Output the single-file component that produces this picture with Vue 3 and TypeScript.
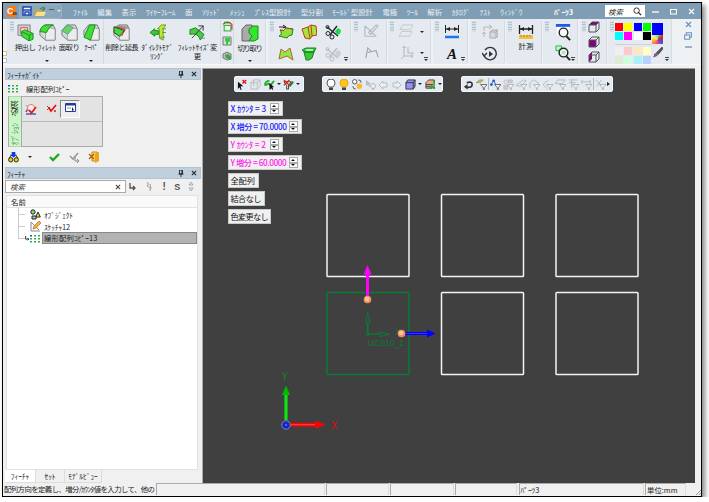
<script setup lang="ts">
import { h } from 'vue'

const green = '#42dc38'
const cube = '<path d="M1 7 6 1h9l2 4v12H7L1 12z" fill="#d6d6d6" stroke="#777"/><path d="M7 17V8l4-4 6 1v12z" fill="#ececec" stroke="#888" stroke-width=".7"/>'
const scissors = (c: string, d: string) => `<path d="M2 3 13 12M12 2 5 11" stroke="${c}" stroke-width="1.4"/><circle cx="3" cy="9.500" r="2" fill="none" stroke="${c}"/><circle cx="7" cy="13" r="2" fill="none" stroke="${c}"/><circle cx="2.500" cy="3" r="1.500" fill="none" stroke="${c}"/><path d="m10 7 3-3 3 2-1 4-3 1z" fill="${d}"/>`
const glasses = '<path d="M1 7 4 3M11 7 8 3" stroke="#222"/><circle cx="3" cy="8.500" r="2.400" fill="#ddd000" stroke="#222"/><circle cx="9" cy="8.500" r="2.400" fill="#ddd000" stroke="#222"/><path d="M4 0h4v3h2L6 6 2 3h2z" fill="#1338d8"/>'
const dots = '<g fill="#2fae45"><path d="M4 2h2v1.600H4zM8 2h2v1.600H8zM0 5h2v1.600H0zM4 5h2v1.600H4zM8 5h2v1.600H8zM0 8h2v1.600H0zM4 8h2v1.600H4zM8 8h2v1.600H8z"/></g><path d="M0 2h2v1.600H0z" fill="#24f"/>'
const funnel = (c: string) => `<path d="M5 6h7L9 9.500V12L8 11V9.500z" fill="#f4f4f4" stroke="${c}" stroke-width=".9"/>`
const wire = '<path d="M1 4 4 1h7v7l-3 3H1zM1 4h7v7M8 4l3-3" fill="none" stroke="#555"/>'
const lens = '<circle cx="8" cy="7" r="4.600" fill="#f4f8fa" stroke="#222" stroke-width="1.500"/><path d="m11 11 4 4" stroke="#222" stroke-width="2"/>'

const art: Record<string, string> = {
  extrude: `<path d="M1 1h13v11H1z" fill="#ccc" stroke="#888"/><path d="M4 4h7v6H4z" fill="#eee" stroke="#d44"/><path d="m5 8 3-2 9 4v6l-4 2-8-5z" fill="${green}" stroke="#178c1c"/><path d="m5 8 8 4v6M13 12l4-2" fill="none" stroke="#178c1c"/>`,
  fillet: cube + `<path d="M1 8Q2 2 7 1h8Q10 3 8 9z" fill="${green}" stroke="#178c1c"/>`,
  chamfer: cube + `<path d="m1 7 6-6 6 3-6 7z" fill="#6ed25e" stroke="#4a9"/>`,
  taper: cube + `<path d="M1 14 7 1h6L8 17z" fill="${green}" stroke="#178c1c"/>`,
  remove: cube + `<path d="m1 3 5-2 11 2-5 3z" fill="#999"/><path d="m1 3 11 4-5 6-6-4z" fill="${green}" stroke="#333"/><path d="m4 3 9 3-4 7" fill="none" stroke="#d22"/>`,
  direct: '<path d="M1 9 6 5v2h4v4H6v2z" fill="#35c932" stroke="#178c1c"/><path d="m9 5 4-4h5l-3 4v12l-4-2V5zM14 5h4M14 9h4M12 14h5" fill="#b9e840" stroke="#6a9a20"/>',
  resize: '<path d="M1 6h8l4 4v5h4" fill="none" stroke="#888"/><path d="m1 6 6-2 9 7-4 6Q10 9 1 11z" fill="#46ca46" stroke="#178c1c"/><path d="m6 12 9-10M10 2h5v5M3 15l3-3" fill="none" stroke="#333"/>',
  cut: '<path d="m1 5 4-4h6v13l-3 3H1z" fill="#aaa" stroke="#666"/><path d="m8 5 4-3h5v13l-4 2H8l3-5-3-3z" fill="#38e52d" stroke="#178c1c"/>',
  mini1: '<rect x="2" y="4" width="6" height="5" fill="#e8fae8" stroke="#2bb548"/><path d="M1 3q4-4 8 0v5" fill="none" stroke="#d22"/><path d="m2 1 4 1" stroke="#1a1"/>',
  mini2: '<path d="M1 1h8v8H1z" fill="#ddd" stroke="#777"/><path d="M3 2h5v3L6 7v2H4V6L3 5z" fill="#2fd136"/>',
  mini3: '<path d="m1 3 4-2 4 2v5L5 9 1 7z" fill="#bbb" stroke="#777"/><path d="m3 4 3-1 3 3v3L4 7z" fill="#35a744"/>',
  surf1: '<path d="M2 6q4 2 6-2l7 1-1 6q-4 0-5 3L1 12q4-2 1-6z" fill="#8be33a" stroke="#2a7d28"/><path d="M2 6q4 2 6-2l7 1" fill="none" stroke="#c43a22"/><path d="M1 3h6M5 1l3 2-3 1" fill="none" stroke="#222"/>',
  surf2: '<path d="M1 5 7 3l3-2 5 1 1 9-5 1-2 3-5-1z" fill="#a6e63b" stroke="#c43a22"/><path d="m7 3 2 11M10 1l1 11" stroke="#c43a22"/>',
  surf3: '<path d="M1 13 3 3l4 3 5-4 3 12-6-4z" fill="#8be93f" stroke="#c8573f"/>',
  surf4: '<path d="m1 4 4-2h10l-2 4H3zM3 6h10l-2 6-3 2H5z" fill="#35c838" stroke="#1d7f24"/><path d="M5 4h7" stroke="#d6fad0" stroke-width="1.500"/>',
  trim: scissors('#222', '#26d54b'), trimOff: scissors('#b9bec2', '#ccd0d3'),
  sketch: '<path d="M1 2v11h12M1 2l12 11M5 9l8-8 2 1-8 9z" fill="none" stroke="#b5babd" stroke-width="1.200"/>',
  poly: '<path d="M2 14 4 3l4 4 5-1 2 7M4 8l4-1" fill="none" stroke="#9da3a6" stroke-width="1.100"/>',
  layer: '<path d="M4 1h11l-3 5H1zM3 8h11l-3 5H0z" fill="none" stroke="#c2c7ca"/>',
  axes: '<path d="M5 1v10l-3 3M5 11h9M3 3l2-2 2 2M12 9l2 2-2 2M9 8V2M9 8h6" fill="none" stroke="#b2b8bc"/>',
  dim: '<path d="M1.500 1v8M14.500 1v8M1 5h14" stroke="#222"/><path d="m2 5 4-2v4zM14 5l-4-2v4z" fill="#222"/><path d="M1 13h14" stroke="#1f72e8" stroke-width="2.500"/>',
  convert: '<path d="M2 7V3h7M7 1l3 2-3 2M2 13v-4M0 10l2-2 2 2" fill="none" stroke="#b5b9bb"/><path d="m8 8 2-2h6v6l-2 2H8zM8 8h6v6M14 8l2-2" fill="#d9dadb" stroke="#aaa"/>',
  history: '<path d="M3 4a6.200 6.200 0 1 1-1 5M0 7l2 3 3-3" fill="none" stroke="#333" stroke-width="1.400"/><path d="m7 5 4 3-4 3z" fill="#333"/>',
  measure: '<path d="M1.500 1v9M14.500 1v9M1 5h14" stroke="#222" stroke-width="1.300"/><path d="m2 5 4-2v4zM14 5l-4-2v4z" fill="#222"/><path d="M1 11h14v4H1z" fill="#f3c242"/><path d="M3 11v2M6 11v2M9 11v2M12 11v2" stroke="#9b6810" stroke-width=".7"/>',
  zoomWin: '<path d="M1 1h15v12H1z" fill="#fff" stroke="#ddd"/><path d="M1 1.500h15" stroke="#1e59e9" stroke-width="3"/><g transform="translate(1 2)">' + lens + '</g>',
  zoomAll: '<path d="M1 1h6v5H1z" fill="#bff5c4" stroke="#2fae45"/><path d="M4 4h6v6H4z" fill="#5bd55e"/><g transform="translate(1 1)">' + lens + '<path d="M6 5h4v4H6z" fill="#a8efb0"/></g>',
  cubeTop: '<path d="M1 4 4 1h7L8 4z" fill="#800080"/>' + wire,
  cubeFront: '<path d="M1 4h7v7H1z" fill="#800080"/>' + wire,
  cubeSide: '<path d="M1 4 4 1v7l-3 3z" fill="#800080"/>' + wire,
  brush: '<path d="M11 0 5 6l2 2 5-6z" fill="#555" stroke="#222" stroke-width=".6"/><path d="m5 6 2 2q-2 4-6 3 2-1 1-3z" fill="#85519c"/>',
  save: '<path d="M1 1h8v8H1z" fill="#fff" stroke="#1f48b5" stroke-width="1.500"/><path d="M1 4h8M3 9V6h4v3" fill="none" stroke="#1f48b5" stroke-width="1.500"/>',
  open: '<path d="M0 4h4l1 1h4v5H0z" fill="#dca631"/><path d="m2 6h9L9 10H0z" fill="#ffe08b"/><path d="M5 3q3-3 5 0M9 1v3H7" fill="none" stroke="#268638"/>',
  dots,
  must1: '<path d="m1 11h10M1 9q1-3 4-4" fill="none" stroke="#55a" stroke-width="1.500"/><circle cx="6" cy="5" r="3.500" fill="#fff4f0" stroke="#d77"/><path d="m1 2 2 2" stroke="#d77"/><path d="m4 7 2.500 3L11 4" fill="none" stroke="#e11" stroke-width="1.700"/>',
  must2: '<path d="m1 3 4 4M1 7l3-3" stroke="#a33"/><path d="m3 5 2 3 5-6" fill="none" stroke="#e11" stroke-width="1.700"/><circle cx="9" cy="8" r="1" fill="#b23"/>',
  win: '<path d="M.5.5h10v8H.5z" fill="#fff" stroke="#223c9a"/><path d="M1 1.500h9" stroke="#223c9a" stroke-width="2"/><path d="M2 5h4" stroke="#999"/><path d="M7 4v4l2-1z" fill="#222"/>',
  glasses,
  ok: '<path d="m1 5 3 3 6-6" fill="none" stroke="#18ad1a" stroke-width="2.300"/>',
  okNext: '<path d="m1 4 3 3 5-6" fill="none" stroke="#999" stroke-width="1.600"/><path d="M6 5v4h4M8 7l2 2-2 2" fill="none" stroke="#888"/>',
  exit: '<path d="M4 1h5v9H4z" fill="#ffd254" stroke="#ca8813"/><path d="m7 3 4-2v9l-4 2z" fill="#eda51b"/><path d="m1 3 5 5M6 3 1 8" stroke="#b4580c" stroke-width="1.300"/>',
  shapes: '<circle cx="3" cy="3" r="2.200" fill="#7be06d" stroke="#222"/><path d="m8 3 2.300 5H5.700z" fill="#dede3b" stroke="#222"/><path d="M2 7h4v3H2z" fill="#bbb" stroke="#222"/>',
  pencil: '<path d="M1 1v9h9M1 1l8 8" fill="none" stroke="#888"/><path d="m3 8 1-3 5-5 2 2-5 5z" fill="#f5b02e" stroke="#b5542d" stroke-width=".6"/>',
  pin: '<path d="M1.500 0h3v4h-3zM.5 4h5M3 4v3" fill="none" stroke="#222" stroke-width=".9"/><path d="M3.500 0h1v4h-1z" fill="#222"/>',
  x: '<path d="m1 1 5 5M6 1 1 6" stroke="currentColor" stroke-width="1.200"/>',
  turn: '<path d="M1 0v5h5M4 3l2 2-2 2" fill="none" stroke="currentColor" stroke-width="1.300"/>',
  squig: '<path d="M2 0q3 2 0 4 4 1 3 5M5 2l1 5" fill="none" stroke="#999"/>',
  updown: '<path d="m1 3 2-3 2 3zM1 6l2 3 2-3z" fill="none" stroke="#999" stroke-width=".8"/>',
  curX: '<path d="M1 3v8l2-2 1 3h1L4 8h3z" fill="#111"/><path d="m6 1 4 4M10 1 6 5" stroke="#e11" stroke-width="1.500"/>',
  boxOff: '<path d="M1 4 4 1h7v7l-3 3H1zM1 4h7v7M8 4l3-3M4 1v7" fill="none" stroke="#b9b9b9"/>',
  pick: '<path d="M1 7q0-5 5-5M1 7l4-2 2 2 4-5" fill="none" stroke="#26b02c" stroke-width="2"/><path d="M6 4v8l2-2 1 2 1-1-1-2h2z" fill="#111"/>',
  pickX: '<path d="M1 3h8L6 7v4H4V7z" fill="#eee" stroke="#333"/><path d="m1 1 6 6M7 1 1 7" stroke="#e11" stroke-width="1.400"/><path d="m7 8 4-5" stroke="#297a31" stroke-width="2.200"/>',
  bulb: '<path d="M3 8Q1 6 1 4a4 4 0 0 1 8 0q0 2-2 4z" fill="#fff" stroke="#555"/><path d="M3 8.500h4V11H3z" fill="#444"/>',
  bulbOn: '<path d="M3 8Q1 6 1 4a4 4 0 0 1 8 0q0 2-2 4z" fill="#ffc61c" stroke="#eea414"/><path d="M3 8.500h4V11H3z" fill="#444"/>',
  bulbs: '<circle cx="3" cy="3" r="2.400" fill="#fff" stroke="#444"/><circle cx="8" cy="8" r="3" fill="#ffb52c"/><path d="M7 1q3 0 3 3M1 8q0 3 3 3" fill="none" stroke="#444"/>',
  bulbPick: '<path d="M1 1v6l2-1 1 2 1-1-1-2h2z" fill="#bbb"/><circle cx="8" cy="7" r="2.500" fill="#eee" stroke="#bbb"/><path d="M7 10h2" stroke="#aaa"/>',
  left: '<path d="m1 6 4-4v2h4v4H5v2z" fill="#eee" stroke="#bbb"/>',
  right: '<path d="M10 6 6 2v2H2v4h4v2z" fill="#eee" stroke="#bbb"/>',
  violet: '<path d="M1 4 3 1h8v7l-2 3H1z" fill="#9a8ff5" stroke="#333"/><path d="M1 4h8v7M9 4l2-3" fill="none" stroke="#333"/>',
  stack: '<path d="m1 4 3-3h6v6l-3 3H1z" fill="#e8aa83" stroke="#444"/><path d="M1 6h8M1 8h7" stroke="#444"/><path d="M10 1v3M5 9h5M7 7v4M10 8v3" stroke="#1fae2a" stroke-width="2"/>',
  back: '<path d="M3 9q7 1 7-3T4 4" fill="none" stroke="#333" stroke-width="1.800"/><path d="M1 8.500 5 5.500v6z" fill="#333"/>',
  flt1: '<path d="M0 4 4 1h4L5 4z" fill="#8c7" stroke="#b95"/>' + funnel('#555'),
  flt2: '<path d="m1 6 3-4 3 5" fill="none" stroke="#2359c9"/><circle cx="1.500" cy="6" r="1.500" fill="#2359c9"/><circle cx="4" cy="2" r="1.500" fill="#2359c9"/>' + funnel('#555'),
  o1: '<circle cx="3" cy="3" r="2" fill="none" stroke="#bbb"/><path d="M6 1h4v3H6zM1 7h4v4H1z" fill="#ccc" stroke="#bbb"/>' + funnel('#aaa'),
  o2: '<path d="m0 7 8-6 3 1-6 6z" fill="none" stroke="#b8b8b8"/>' + funnel('#aaa'),
  o3: '<path d="M1 10V4l4-3 5 3v4" fill="none" stroke="#b8b8b8"/>' + funnel('#aaa'),
  o4: '<path d="M7 1 1 6l5 5" fill="none" stroke="#b8b8b8"/>' + funnel('#aaa'),
  o5: '<path d="M3 1h8L8 5H0z" fill="none" stroke="#b8b8b8"/>' + funnel('#aaa'),
  o6: '<path d="M1 1h9M1 4h7M4 1v9" fill="none" stroke="#b8b8b8"/>' + funnel('#aaa'),
  o7: '<path d="M1 1v4M10 1v4M1 3h9" fill="none" stroke="#b8b8b8"/>' + funnel('#aaa'),
  o8: '<path d="m1 1 5 6M7 1 2 8" fill="none" stroke="#b8b8b8"/>' + funnel('#aaa'),
  find: '<circle cx="4" cy="4" r="3" fill="none" stroke="#222"/><path d="m6 6 3 3" stroke="#222" stroke-width="1.400"/>',
  min: '<path d="M0 4h7" stroke="currentColor" stroke-width="1.300"/>',
  max: '<path d="M.5 1.500h6v4.500h-6z" fill="none" stroke="currentColor" stroke-width="1.100"/>',
  restore: '<path d="M2 2.500V.7h4.500v3.800H5M.6 2.600H5v3.700H.6z" fill="none" stroke="currentColor" stroke-width=".9"/>',
}

const Ico = (p: { n: string; s?: number; b?: number }) => {
  const b = p.b ?? 12
  const s = p.s ?? b
  return h('svg', { class: 'ico', width: s, height: s, viewBox: `0 0 ${b} ${b}`, innerHTML: art[p.n] })
}
Ico.props = ['n', 's', 'b']

const menus = ['ﾌｧｲﾙ', '編集', '表示', 'ﾜｲﾔｰﾌﾚｰﾑ', '面', 'ｿﾘｯﾄﾞ', 'ﾒｯｼｭ', 'ﾌﾟﾚｽ型設計', '型分割', 'ﾓｰﾙﾄﾞ型設計', '電極', 'ﾂｰﾙ', '解析', 'ｶﾀﾛｸﾞ', 'ﾃｽﾄ', 'ｳｨﾝﾄﾞｳ']
const solids = [
  { n: 'extrude', t: '押出し', d: false }, { n: 'fillet', t: 'ﾌｨﾚｯﾄ', d: true },
  { n: 'chamfer', t: '面取り', d: false }, { n: 'taper', t: 'ﾃｰﾊﾟ', d: true },
]
const edits = [
  { n: 'remove', t: ['削除と延長'], c: 'w35' },
  { n: 'direct', t: ['ﾀﾞｲﾚｸﾄﾓﾃﾞ', 'ﾘﾝｸﾞ'], c: 'w36' },
  { n: 'resize', t: ['ﾌｨﾚｯﾄｻｲｽﾞ変', '更'], c: 'w45' },
]
const bright = ['red', 'yellow', 'blue', 'lime', 'cyan', 'magenta', 'white', 'black']
const pale = ['#f0f0f0', '#ffc8cc', '#ffe6c0', '#ffffc4', '#dcecd0', '#ccffe0', '#aaf0fa', '#b8d0ff']
const params = [
  { t: 'X ｶｳﾝﾀ = 3', c: 'bx', w: 'short' }, { t: 'X 増分 = 70.0000', c: 'bx', w: 'long' },
  { t: 'Y ｶｳﾝﾀ = 2', c: 'by', w: 'short' }, { t: 'Y 増分 = 60.0000', c: 'by', w: 'long' },
]
const filters = ['o1', 'o2', 'o3', 'o4', 'o5', 'o6', 'o7']
const cols = [327, 441.5, 556]
const cells = [194.5, 292.5].flatMap((y, r) => cols.map((x, c) => ({ x, y, own: r === 1 && c === 0 })))
</script>

<template>
  <div class="window">
    <header class="title">
      <div class="quick">
        <i class="logo">C<small>85</small></i>
        <div class="qbox"><Ico n="save" :b="10" /><Ico n="open" :b="11" /><span class="qsep"></span><i class="tri lite"></i></div>
      </div>
      <nav><span v-for="m in menus" :key="m">{{ m }}</span></nav>
      <b class="doc">ﾊﾟｰﾂ3</b>
      <div class="tsearch"><em>検索</em><Ico n="find" :b="10" :s="9" /></div>
      <div class="wbtn"><Ico n="min" :b="7" /><Ico n="max" :b="7" /><Ico n="x" :b="7" /></div>
    </header>

    <section class="ribbon">
      <div class="stub"><i></i><i></i></div>
      <div class="grp g1">
        <i class="grip"></i>
        <div v-for="s in solids" :key="s.n" class="big w22">
          <Ico :n="s.n" :b="18" :s="17" /><span>{{ s.t }}</span><i v-if="s.d" class="tri foot"></i>
        </div>
        <div class="split"></div>
        <div v-for="e in edits" :key="e.n" class="big" :class="e.c">
          <Ico :n="e.n" :b="18" :s="17" /><span v-for="l in e.t" :key="l">{{ l }}</span>
        </div>
        <div class="minis"><Ico n="mini1" :b="10" :s="11" /><Ico n="mini2" :b="10" /><Ico n="mini3" :b="10" /></div>
        <div class="big last"><Ico n="cut" :b="18" :s="18" /><span>切り取り</span><i class="tri foot"></i></div>
      </div>
      <div class="grp g2">
        <i class="grip"></i>
        <div class="six"><Ico v-for="n in ['surf1', 'surf2', 'trim', 'surf3', 'surf4', 'trimOff']" :key="n" :n="n" :b="16" /></div>
        <i class="more"></i>
      </div>
      <div class="grp g3"><i class="grip"></i><div class="pair"><Ico n="sketch" :b="16" :s="15" /><Ico n="poly" :b="16" :s="15" /></div></div>
      <div class="grp g4"><i class="grip"></i><div class="pair"><Ico n="layer" :b="16" :s="15" /><Ico n="axes" :b="16" :s="16" /></div><div class="tris"><i class="tri"></i><i class="tri"></i></div><i class="more"></i></div>
      <div class="grp g5"><i class="grip"></i><div class="pair"><Ico n="dim" :b="16" /><b class="serif">A</b></div><i class="more"></i></div>
      <div class="grp g6"><i class="grip"></i><div class="pair"><Ico n="convert" :b="16" /><Ico n="history" :b="16" /></div></div>
      <div class="grp g7"><i class="grip"></i><div class="big meas"><Ico n="measure" :b="16" /><span>計測</span></div></div>
      <div class="grp g8"><i class="grip"></i><div class="pair"><Ico n="zoomWin" :b="18" :s="17" /><Ico n="zoomAll" :b="18" :s="17" /></div><i class="more"></i></div>
      <div class="grp g9"><i class="grip"></i><div class="trio"><Ico n="cubeTop" /><Ico n="cubeFront" /><Ico n="cubeSide" /></div></div>
      <div class="grp g10">
        <i class="grip"></i>
        <div class="pal">
          <div class="sw"><i v-for="c in bright" :key="c" :style="{ background: c }"></i></div>
          <div class="sw pale"><i v-for="c in pale" :key="c" :style="{ background: c }"></i></div>
        </div>
        <div class="cur"><i class="solid"></i><i class="rainbow"></i><Ico n="brush" :s="11" /></div>
        <i class="more"></i>
      </div>
      <div class="mdi"><Ico n="x" :b="7" /><Ico n="restore" :b="7" :s="8" /><Ico n="min" :b="7" /></div>
    </section>

    <main>
      <aside>
        <div class="phead"><span>ﾌｨｰﾁｬｶﾞｲﾄﾞ</span><Ico n="pin" :b="7" /><Ico n="x" :b="7" :s="6" /></div>
        <div class="guide">
          <div class="gname"><Ico n="dots" :b="10" /><span>線形配列ｺﾋﾟｰ</span></div>
          <div class="opts">
            <div class="vtab">必須</div>
            <div class="orow"><Ico n="must1" /><Ico n="must2" :b="11" :s="11" /><div class="pressed"><Ico n="win" :b="11" /></div></div>
            <div class="vtab dim">ｵﾌﾟｼｮﾝ</div>
            <div class="orow"></div>
          </div>
          <div class="acts"><Ico n="glasses" :s="11" /><i class="tri"></i><Ico n="ok" :b="11" /><Ico n="okNext" :b="11" /><Ico n="exit" /></div>
        </div>
        <div class="phead"><span>ﾌｨｰﾁｬ</span><Ico n="pin" :b="7" /><Ico n="x" :b="7" :s="6" /></div>
        <div class="srow">
          <div class="sbox"><em>検索</em><Ico n="x" :b="7" :s="6" /></div>
          <div class="stools"><Ico n="turn" :b="8" /><Ico n="squig" :b="9" /><b>!</b><b class="s">S</b><Ico n="updown" :b="9" /></div>
        </div>
        <div class="list">
          <div class="lhead">名前</div>
          <div class="node"><i class="br"></i><Ico n="shapes" :b="11" /><span>ｵﾌﾞｼﾞｪｸﾄ</span></div>
          <div class="node"><i class="br"></i><Ico n="pencil" :b="11" /><span>ｽｹｯﾁｬ12</span></div>
          <div class="node"><i class="br end"></i><Ico n="turn" class="tn" :b="8" :s="5" /><Ico n="dots" :b="10" /><span class="sel">線形配列ｺﾋﾟｰ13</span></div>
        </div>
        <div class="tabs"><span class="on">ﾌｨｰﾁｬ</span><span>ｾｯﾄ</span><span>ﾓﾃﾞﾙﾋﾞｭｰ</span></div>
      </aside>

      <section class="view">
        <svg class="scene" width="493" height="415" viewBox="202 68 493 415">
          <rect v-for="c in cells" :key="c.x + '-' + c.y" :x="c.x" :y="c.y" width="82" height="82" rx=".8" fill="none" :stroke="c.own ? '#087b35' : '#f4f4f4'" stroke-width="1.5" />
          <g stroke="#087b35" fill="none">
            <path d="M367.700 323v11H380" stroke-width="1.700" />
            <path d="m365.500 323 2.200-11 2.200 11zM380 332l10 2.300-10 2.300z" />
            <circle cx="367.500" cy="334.500" r="1.500" />
          </g>
          <g class="ucs"><text x="367.500" y="346" textLength="36.500" lengthAdjust="spacingAndGlyphs">UCS10_1</text><text x="395" y="335">X</text></g>
          <path d="M367.500 297V273" stroke="#f0f" stroke-width="3" /><path d="m363.500 274.500 4-9.500 4 9.500z" fill="#f0f" />
          <path d="M404 333.500h24" stroke="#00f" stroke-width="3" /><path d="m427 329.500 8.500 4-8.500 4z" fill="#00f" />
          <path d="M405 333.500h22" stroke="#33f" stroke-width="1" />
          <circle cx="367.500" cy="299.500" r="3.800" fill="#ef9159" /><circle cx="367.200" cy="299" r="2.300" fill="#ffc495" />
          <circle cx="401.500" cy="333.500" r="3.800" fill="#ef9159" /><circle cx="401.200" cy="333" r="2.300" fill="#ffc495" />
          <path d="M286 420V394" stroke="#0c0" stroke-width="3.600" /><path d="M286 420V395" stroke="#4be24b" /><path d="m282 395 4-9.500 4 9.500z" fill="#00ba00" />
          <path d="M290 424.700h27" stroke="#f00" stroke-width="3.800" /><path d="m315.500 420.700 10 4-10 4z" fill="#f00" /><path d="M291 424.700h24" stroke="#ff4545" />
          <circle cx="286" cy="425" r="4.200" fill="#1425c8" stroke="#7a8ab0" /><circle cx="286" cy="425" r="1" fill="#5b78ff" />
          <g class="axis"><text x="281.500" y="379.500" fill="#17851b">Y</text><text x="331" y="429" fill="#e00808">X</text></g>
        </svg>
        <div class="bars">
          <div class="bar b1"><Ico n="curX" :s="11" /><Ico n="boxOff" :s="11" /><hr /><Ico n="pick" :s="11" /><i class="tri"></i><Ico n="pickX" :s="11" /><i class="tri"></i></div>
          <div class="bar b2"><Ico n="bulb" :b="11" /><Ico n="bulbOn" :b="11" /><Ico n="bulbs" :s="11" /><Ico n="bulbPick" :b="11" /><Ico n="left" :b="11" /><Ico n="right" :b="11" /><hr /><Ico n="violet" :s="11" /><i class="tri"></i><Ico n="stack" :s="11" /><i class="tri"></i></div>
          <div class="bar b3"><Ico n="back" :s="11" /><Ico n="flt1" :s="11" /><hr /><Ico n="flt2" :s="11" /><Ico v-for="f in filters" :key="f" :n="f" :s="11" /><hr /><Ico n="o8" :s="11" /><i class="tri side"></i></div>
        </div>
        <div class="params">
          <div v-for="p in params" :key="p.t" class="param" :class="[p.c, p.w]"><span>{{ p.t }}</span><div class="spin"><i><u class="up"></u></i><i><u></u></i></div></div>
          <div class="param p30">全配列</div>
          <div class="param p36">結合なし</div>
          <div class="param p43">色変更なし</div>
        </div>
      </section>
    </main>

    <footer>
      <span class="msg">配列方向を定義し、増分/ｶｳﾝﾀ値を入力して、他の</span>
      <span class="c1"></span><span class="c2"></span><span class="c3"></span><span class="c4"></span><span class="c5">ﾊﾟｰﾂ3</span><span class="c6">単位:mm</span>
      <svg class="rz" width="9" height="9"><path d="M1 9 9 1M4 9l5-5M7 9l2-2" stroke="#999" /></svg>
    </footer>
  </div>
</template>

<style>
body { background: #fff; overflow: hidden; }
.ico { display: block; flex: none; }
</style>

<style scoped>
* { box-sizing: border-box; }
i, b { font-style: normal; }
.window { width: 700px; height: 495px; margin: 2px 0 0 2px; border: 1px solid #000; background: #f0f0f0; display: flex; flex-direction: column; font: 7.4px/9px "Noto Sans CJK JP", sans-serif; color: #222; box-shadow: 3px 3px 5px #888; white-space: nowrap; overflow: hidden; }
.tri { width: 0; height: 0; border: 2px solid transparent; border-top: 2.5px solid #222; border-bottom: 0; flex: none; }
.tri.side { border: 2px solid transparent; border-left: 3px solid #222; border-right: 0; }
.tri.lite { border-top-color: #e8eef2; }

.title { height: 16px; flex: none; background: #7f9eb5; display: flex; align-items: center; color: #e8eff4; }
.quick { width: 70px; display: flex; align-items: center; gap: 3px; padding-left: 4px; }
.logo { width: 9px; height: 11px; background: #f47c20; color: #fff; font: bold 9px/11px "Liberation Sans", sans-serif; display: flex; }
.logo small { font-size: 4px; line-height: 16px; color: #222; margin-left: -1px; }
.qbox { width: 43px; height: 15px; border: 1px solid #9bb2c4; border-radius: 3px; background: #8ba7bc; display: flex; align-items: center; padding-left: 2px; gap: 3px; }
.qsep { width: 5px; height: 5px; border-top: 1px solid #466; border-bottom: 1px solid #9ab; }
nav { width: 481px; display: flex; gap: 9.5px; }
.doc { width: 51px; color: #fff; }
.tsearch { width: 40px; height: 12px; background: #fff; display: flex; align-items: center; justify-content: space-between; padding: 0 3px; color: #333; }
.wbtn { display: flex; gap: 11px; padding-left: 7px; color: #fff; }

.ribbon { height: 46px; flex: none; display: flex; padding-bottom: 1px; background: #eef1f3; }
.stub { width: 4px; display: flex; flex-direction: column; justify-content: flex-end; gap: 2px; padding-bottom: 1px; }
.stub i { width: 4px; height: 5px; border: 1px solid #e9bd74; border-left: 0; background: #fff; }
.stub i + i { border-color: #b8cada; }
.grp { display: flex; background: #e4eaef; border-right: 1px solid #d5dbe0; border-radius: 2px; margin-right: 1.5px; padding: 2px 0 0 2px; position: relative; flex: none; }
.grip { width: 4px; height: 11px; flex: none; background: radial-gradient(circle, #9fb6c6 .8px, transparent 1px) 0 0 / 2px 2.5px; }
.g1 { width: 259px; padding-left: 3px; } .g2 { width: 83px; } .g3 { width: 34.5px; } .g4 { width: 43px; } .g5 { width: 35.5px; }
.g6 { width: 35px; } .g7 { width: 35.5px; } .g8 { width: 35px; } .g9 { width: 27px; } .g10 { width: 64px; }
.big { display: flex; flex-direction: column; align-items: center; padding-top: 3px; position: relative; line-height: 9px; letter-spacing: -.1px; }
.big svg { margin-bottom: .5px; }
.w22 { width: 22px; letter-spacing: -.5px; }
.w22:nth-child(3) { letter-spacing: 0; }
.w35 { width: 35px; letter-spacing: -.9px; } .w36 { width: 36px; letter-spacing: -.3px; } .w45 { width: 45px; }
.big.last { width: 31px; letter-spacing: -1.4px; }
.foot { position: absolute; bottom: 2px; left: calc(50% - 2px); }
.split { width: 1px; margin: -2px 0 0 1px; background: #d3dae0; }
.minis { width: 14px; margin: -2px 0 0; border: solid #d3dae0; border-width: 0 1px; display: flex; flex-direction: column; align-items: center; justify-content: space-around; padding-bottom: 1px; }
.more { position: absolute; right: 2px; bottom: 2px; width: 4px; height: 5px; border-top: 1px solid #444; }
.more::after { content: ""; display: block; border: 2px solid transparent; border-top: 2px solid #333; margin-top: 1px; }
.six { display: grid; grid-template-columns: repeat(3, 16px); gap: 6px 7.5px; padding: 3px 0 0 4px; align-content: start; }
.pair { display: flex; flex-direction: column; align-items: center; padding: 3px 0 0 3px; gap: 6px; width: 22px; }
.g3 .pair { padding-left: 4px; }
.g5 .pair { padding-left: 5px; }
.g6 .pair, .g8 .pair { width: 24px; padding-left: 5px; }
.g8 .pair { gap: 4px; }
.tris { display: flex; flex-direction: column; gap: 19px; padding: 10px 0 0 4px; }
.serif { font: italic bold 15px/16px "Liberation Serif", serif; color: #111; }
.big.meas { width: 25px; padding-left: 3px; letter-spacing: 0; }
.trio { display: flex; flex-direction: column; gap: 3px; padding: 0 0 0 2px; }
.pal { padding: 2px 0 0 1px; width: 36px; }
.sw { display: grid; grid-template-columns: repeat(4, 8px); grid-auto-rows: 8px; gap: 1.4px; width: 37px; padding-bottom: 4px; border-bottom: 1px solid #ccd2d8; }
.sw.pale { padding-top: 2px; border: 0; gap: 1px 1.4px; }
.cur { display: flex; flex-direction: column; align-items: center; padding-top: 2px; margin-left: 2px; }
.solid { width: 11px; height: 12px; background: #00f; }
.rainbow { width: 11px; height: 9px; margin-bottom: 3px; background: conic-gradient(#7de37a, #d22, #45c, #f39, #f93, #fff370, #7de37a); }
.mdi { display: flex; flex-direction: column; align-items: center; gap: 3.5px; padding: 2px 0 0 10.5px; color: #6a8fba; }

main { height: 419px; flex: none; display: flex; padding: 3px 0 0 2px; margin-top: -1px; background: #f0f0f0; border-top: 1px solid #f7f7f7; }
aside { width: 195.5px; display: flex; flex-direction: column; flex: none; }
.phead { height: 12px; flex: none; background: #c0cfdd; border: 1px solid #b4c2d0; display: flex; align-items: center; gap: 6px; padding: 0 3px 0 1px; letter-spacing: -.1px; }
.phead span { flex: 1; }
.guide { height: 87px; flex: none; padding: 3px 0 0 3px; }
.gname { display: flex; align-items: center; gap: 8px; height: 10px; margin-bottom: 3px; }
.gname span { letter-spacing: -.15px; }
.opts { width: 95px; height: 51px; border: 1px solid #aaa; display: grid; grid-template-columns: 12px 1fr; grid-template-rows: 1fr 1fr; background: #e3e3e3; }
.vtab { background: #c7f7c4; writing-mode: vertical-rl; transform: rotate(180deg); text-align: center; line-height: 11px; font-size: 8px; letter-spacing: -.3px; overflow: hidden; }
.vtab.dim { color: #5e895e; }
.orow { border-bottom: 1px solid #bbb; border-left: 1px solid #aaa; display: flex; align-items: center; padding-left: 3px; gap: 9px; }
.orow:last-child { border-bottom: 0; }
.pressed { width: 20px; height: 18px; border: 1px solid #fff; border-top-color: #888; border-left-color: #888; background: #eee; display: flex; align-items: center; justify-content: center; margin-left: -6px; }
.acts { display: flex; align-items: center; height: 20px; }
.acts .tri { margin: 0 17px 0 9px; } .acts svg { margin-right: 8.5px; } .acts svg:first-child { margin-right: 0; }
.srow { display: flex; height: 13px; flex: none; margin-top: 1px; }
.sbox { width: 121px; background: #fff; border: 1px solid #aaa; display: flex; align-items: center; justify-content: space-between; padding: 0 4px; color: #444; }
.stools { flex: 1; display: flex; align-items: center; justify-content: space-between; padding: 0 3px 0 3px; color: #555; }
.stools b { font: bold 10px/12px "Liberation Sans", sans-serif; } .stools .s { font-size: 9px; }
.list { width: 192px; height: 275px; margin: 2px 0 0 1px; flex: none; background: #fff; border: 1px solid #e2e2e2; }
.lhead { height: 12px; padding: 0 4px; line-height: 11px; background: #fafafa; border-bottom: 1px solid #e2e2e2; }
.node { height: 12px; display: flex; align-items: center; padding-left: 11px; }
.node span { margin-left: 2px; flex: 1; line-height: 11px; padding-left: 1px; letter-spacing: -.1px; }
.br { width: 6px; height: 12px; border-left: 1px solid #ccc; margin-right: 6px; position: relative; }
.br::after { content: ""; position: absolute; top: 6px; width: 6px; border-top: 1px solid #ccc; }
.br.end { height: 7px; align-self: flex-start; margin-right: 1px; }
.tn { color: #111; }
.node .sel { background: #b3b3b3; border: 1px solid #888; height: 12px; line-height: 10px; letter-spacing: .1px; }
.tabs { display: flex; height: 13px; flex: none; line-height: 11px; text-align: center; }
.tabs span { border-right: 1px solid #ddd; border-bottom: 1px solid #ddd; width: 37px; }
.tabs .on { background: #fff; width: 31px; } .tabs span:nth-child(2) { width: 29px; }

.view { width: 493px; height: 415px; margin-left: 1px; background: #404040; border-top: 1px solid #999; border-left: 1px solid #aaa; position: relative; flex: none; }
.scene { position: absolute; left: -1px; top: -1px; }
.ucs text { font: 9px "Liberation Sans", sans-serif; fill: #087b35; }
.axis text { font: 10px "Liberation Sans", sans-serif; }
.bars { position: relative; display: flex; padding: 7px 0 0 31px; }
.bar { height: 16px; background: #e4eaf1; border: 1px solid #f5f7fa; border-radius: 2px; display: flex; align-items: center; padding: 0 2px; gap: 2px; flex: none; }
.bar hr { margin: 0 -.5px; border: 0; width: 1px; height: 12px; background: #aeb6be; }
.b1 { width: 70px; margin-right: 18px; }
.b1 .tri { margin: 0 .5px 0 0; }
.b2 { width: 121px; margin-right: 18px; padding-left: 3px; }
.b2 .tri { margin: 0 1px 0 0; }
.b3 { width: 152.5px; padding-left: 1px; }
.b3 .side { margin-left: -1px; }
.params { position: relative; display: flex; flex-direction: column; align-items: flex-start; gap: 3px; padding: 9px 0 0 25px; }
.param { height: 15px; background: #f0f0f0; border: 1px solid #c8c8c8; padding: 0 2px; font-size: 8.2px; line-height: 13px; display: flex; align-items: center; color: #111; letter-spacing: -.1px; }
.bx { color: #22f; } .by { color: #f2e; }
.bx, .by { justify-content: space-between; font-weight: 500; }
.short { width: 55px; letter-spacing: -.05px; } .long { width: 74px; letter-spacing: -.42px; }
.p30 { width: 31px; } .p36 { width: 37px; letter-spacing: -.6px; } .p43 { width: 43px; letter-spacing: -.7px; }
.spin { width: 9px; flex: none; }
.short .spin, .long .spin { margin-right: 1px; }
.spin i { display: flex; width: 9px; height: 5.5px; border: 1px solid #aaa; background: #fff; align-items: center; justify-content: center; }
.spin u { border: 2px solid transparent; border-top: 2px solid #111; border-bottom: 0; }
.spin .up { border-top: 0; border-bottom: 2px solid #111; }

footer { height: 12px; flex: none; display: flex; gap: 1.5px; padding-left: 1px; line-height: 11px; background: #f0f0f0; }
footer span { border: 1px solid #aaa; border-right-color: #ddd; border-bottom: 0; flex: none; padding-left: 1px; }
footer .msg { width: 150.5px; border: 0; letter-spacing: -.58px; padding: 0; }
.c1 { width: 168.5px; } .c2 { width: 62.5px; } .c3 { width: 63.5px; } .c4 { width: 62px; } .c5 { width: 125px; } .c6 { width: 41px; }
.rz { margin: 3px 0 0 7px; }
</style>
